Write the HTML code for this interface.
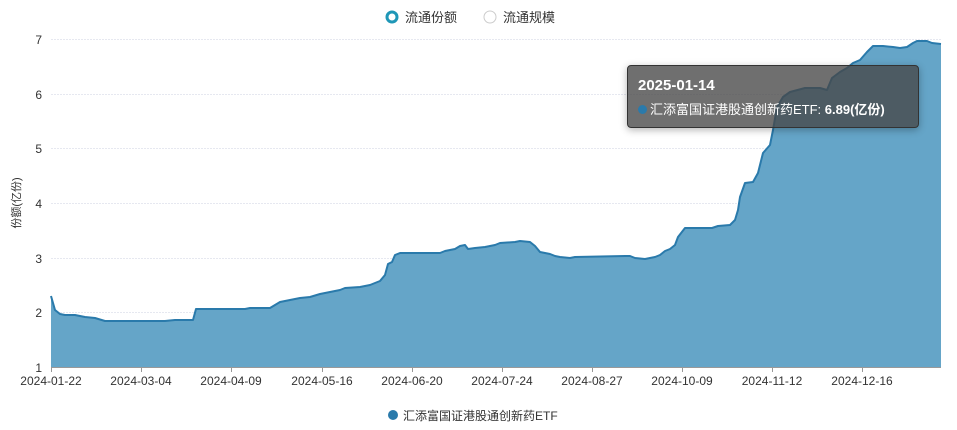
<!DOCTYPE html>
<html><head><meta charset="utf-8"><style>
body{margin:0;background:#fff;width:957px;height:430px;overflow:hidden;font-family:"Liberation Sans","Noto Sans CJK SC",sans-serif}
.tt{position:absolute;left:627px;top:65px;width:292px;height:63px;background:rgba(70,70,70,0.78);border:1px solid #333;border-radius:4px;box-shadow:0 2px 8px rgba(0,0,0,0.3);color:#fff;box-sizing:border-box}
</style></head><body>
<svg width="957" height="430" style="position:absolute;left:0;top:0" font-family="Liberation Sans, Noto Sans CJK SC, sans-serif">
<g stroke="#e6e8f0" stroke-dasharray="2,1" stroke-width="1">
<line x1="51" x2="941" y1="39.5" y2="39.5"/><line x1="51" x2="941" y1="94.5" y2="94.5"/><line x1="51" x2="941" y1="148.5" y2="148.5"/><line x1="51" x2="941" y1="203.5" y2="203.5"/><line x1="51" x2="941" y1="258.5" y2="258.5"/><line x1="51" x2="941" y1="312.5" y2="312.5"/>
</g>
<defs><path id="ln" d="M51,296 L55,310 L60,314 L65,315 L75,315 L85,317 L95,318 L105,321 L110,321 L165,321 L175,320 L193,320 L196,309 L245,309 L250,308 L270,308 L275,305 L280,302 L290,300 L295,299 L300,298 L310,297 L320,294 L330,292 L340,290 L345,288 L360,287 L370,285 L380,281 L385,275 L388,264 L392,262 L395,255 L400,253 L440,253 L445,251 L455,249 L460,246 L465,245 L468,249 L475,248 L485,247 L490,246 L495,245 L500,243 L515,242 L520,241 L530,242 L535,246 L540,252 L550,254 L555,256 L560,257 L570,258 L575,257 L625,256 L630,256 L635,258 L645,259 L655,257 L660,255 L665,251 L670,249 L675,245 L678,237 L685,228 L712,228 L718,226 L730,225 L735,220 L738,210 L740,197 L745,183 L753,182 L758,173 L763,153 L770,145 L773,130 L777,107 L783,97 L790,92 L805,88 L820,88 L827,90 L832,78 L840,72 L847,68 L853,63 L860,60 L867,52 L873,46 L883,46 L893,47 L900,48 L907,47 L913,43 L917,41 L927,41 L932,43 L941,44"/></defs>
<path fill="#65a5c8" d="M51,296 L55,310 L60,314 L65,315 L75,315 L85,317 L95,318 L105,321 L110,321 L165,321 L175,320 L193,320 L196,309 L245,309 L250,308 L270,308 L275,305 L280,302 L290,300 L295,299 L300,298 L310,297 L320,294 L330,292 L340,290 L345,288 L360,287 L370,285 L380,281 L385,275 L388,264 L392,262 L395,255 L400,253 L440,253 L445,251 L455,249 L460,246 L465,245 L468,249 L475,248 L485,247 L490,246 L495,245 L500,243 L515,242 L520,241 L530,242 L535,246 L540,252 L550,254 L555,256 L560,257 L570,258 L575,257 L625,256 L630,256 L635,258 L645,259 L655,257 L660,255 L665,251 L670,249 L675,245 L678,237 L685,228 L712,228 L718,226 L730,225 L735,220 L738,210 L740,197 L745,183 L753,182 L758,173 L763,153 L770,145 L773,130 L777,107 L783,97 L790,92 L805,88 L820,88 L827,90 L832,78 L840,72 L847,68 L853,63 L860,60 L867,52 L873,46 L883,46 L893,47 L900,48 L907,47 L913,43 L917,41 L927,41 L932,43 L941,44 L941,367 L51,367 Z"/>
<use href="#ln" fill="none" stroke="#2a7aab" stroke-width="2" stroke-linejoin="round"/>
<line x1="51" x2="941" y1="367.5" y2="367.5" stroke="#999"/>
<g stroke="#999"><line x1="51.5" x2="51.5" y1="367" y2="372"/><line x1="141.5" x2="141.5" y1="367" y2="372"/><line x1="231.5" x2="231.5" y1="367" y2="372"/><line x1="322.5" x2="322.5" y1="367" y2="372"/><line x1="412.5" x2="412.5" y1="367" y2="372"/><line x1="502.5" x2="502.5" y1="367" y2="372"/><line x1="592.5" x2="592.5" y1="367" y2="372"/><line x1="682.5" x2="682.5" y1="367" y2="372"/><line x1="772.5" x2="772.5" y1="367" y2="372"/><line x1="862.5" x2="862.5" y1="367" y2="372"/></g>
<g font-size="12" fill="#333" text-anchor="end"><text x="42" y="44">7</text><text x="42" y="99">6</text><text x="42" y="153">5</text><text x="42" y="208">4</text><text x="42" y="263">3</text><text x="42" y="317">2</text><text x="42" y="372">1</text></g>
<g font-size="12" fill="#333" text-anchor="middle"><text x="51" y="385">2024-01-22</text><text x="141" y="385">2024-03-04</text><text x="231" y="385">2024-04-09</text><text x="322" y="385">2024-05-16</text><text x="412" y="385">2024-06-20</text><text x="502" y="385">2024-07-24</text><text x="592" y="385">2024-08-27</text><text x="682" y="385">2024-10-09</text><text x="772" y="385">2024-11-12</text><text x="862" y="385">2024-12-16</text></g>
<text transform="translate(20,203) rotate(-90)" font-size="11" fill="#333" text-anchor="middle">份额(亿份)</text>
<circle cx="392" cy="17" r="5" fill="none" stroke="#1f97b7" stroke-width="3"/>
<text x="405" y="22" font-size="13" fill="#333">流通份额</text>
<circle cx="490" cy="17" r="6" fill="none" stroke="#ccc" stroke-width="1"/>
<text x="503" y="22" font-size="13" fill="#333">流通规模</text>
<circle cx="393" cy="415" r="5" fill="#2a7aab"/>
<text x="403" y="420" font-size="12" fill="#333">汇添富国证港股通创新药ETF</text>
</svg>
<div class="tt">
<div style="position:absolute;left:10px;top:11px;font-size:15px;font-weight:bold">2025-01-14</div>
<div style="position:absolute;left:10px;top:33px;font-size:13px;white-space:nowrap"><span style="display:inline-block;width:9px;height:9px;border-radius:50%;background:#2a7aab;margin-right:3px"></span>汇添富国证港股通创新药ETF: <b>6.89(亿份)</b></div>
</div>
</body></html>
